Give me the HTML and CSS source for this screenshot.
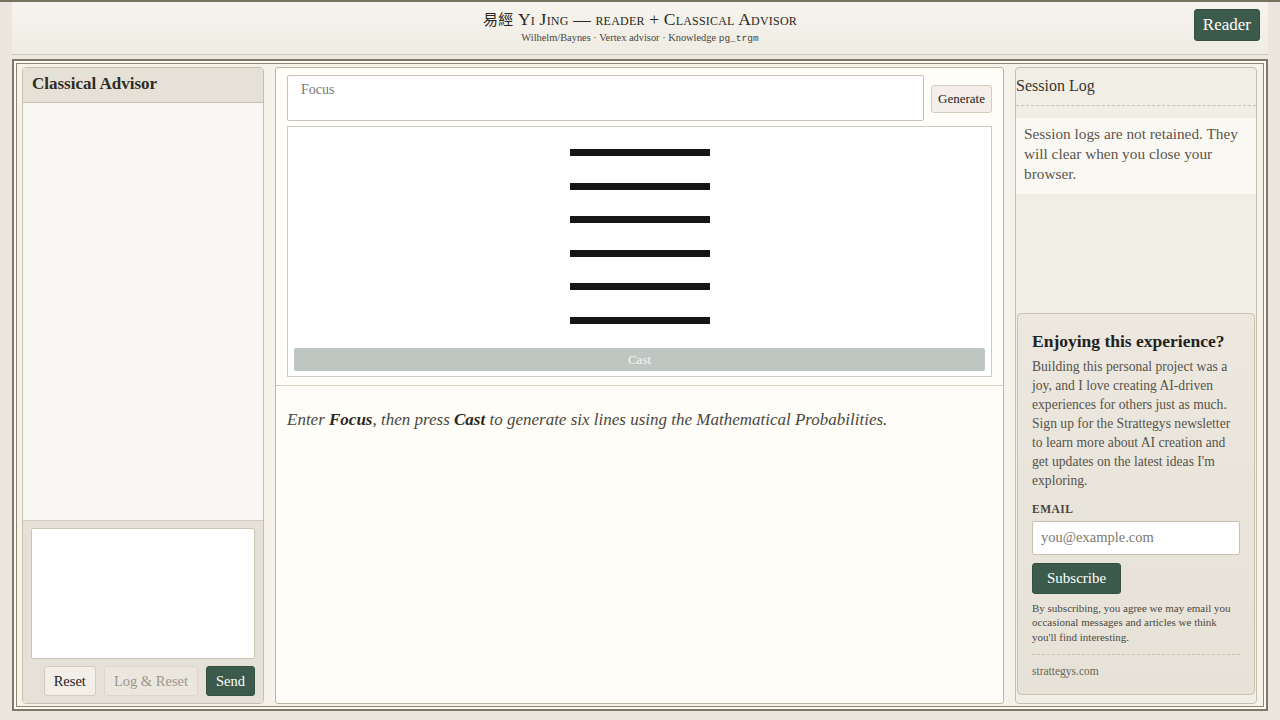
FILE: index.html
```html
<!DOCTYPE html>
<html lang="en">
<head>
  <meta charset="UTF-8">
  <title>Yi Jing Reader</title>
  <link rel="stylesheet" href="styles.css">
</head>
<body>
  <header class="topbar">
    <div class="brand">
      <div class="brand-title"><span class="han">易經</span> Yi Jing — reader + Classical Advisor</div>
      <div class="brand-sub">Wilhelm/Baynes · Vertex advisor · Knowledge <code>pg_trgm</code></div>
    </div>
    <button class="btn btn-green reader-btn">Reader</button>
  </header>

  <main class="frame">
    <section class="panel advisor">
      <div class="advisor-head">Classical Advisor</div>
      <div class="advisor-body"></div>
      <div class="advisor-foot">
        <textarea class="advisor-input"></textarea>
        <div class="advisor-actions">
          <button class="btn btn-light">Reset</button>
          <button class="btn btn-light btn-disabled">Log &amp; Reset</button>
          <button class="btn btn-green">Send</button>
        </div>
      </div>
    </section>

    <section class="panel reader">
      <div class="cast-form">
        <div class="focus-row">
          <textarea class="focus-input" placeholder="Focus"></textarea>
          <button class="btn btn-light gen-btn">Generate</button>
        </div>
        <div class="hex-box">
          <div class="hex-lines">
            <div class="hex-line"></div>
            <div class="hex-line"></div>
            <div class="hex-line"></div>
            <div class="hex-line"></div>
            <div class="hex-line"></div>
            <div class="hex-line"></div>
          </div>
          <button class="cast-btn">Cast</button>
        </div>
      </div>
      <div class="reading">
        <p class="hint">Enter <b>Focus</b>, then press <b>Cast</b> to generate six lines using the Mathematical Probabilities.</p>
      </div>
    </section>

    <aside class="panel side">
      <div class="log-head">Session Log</div>
      <div class="log-note">Session logs are not retained. They will clear when you close your browser.</div>

      <div class="promo">
        <h3>Enjoying this experience?</h3>
        <p class="promo-text">Building this personal project was a joy, and I love creating AI-driven experiences for others just as much. Sign up for the Strattegys newsletter to learn more about AI creation and get updates on the latest ideas I'm exploring.</p>
        <label class="promo-label">EMAIL</label>
        <input class="promo-input" type="text" placeholder="you@example.com">
        <button class="btn btn-green sub-btn">Subscribe</button>
        <p class="promo-fine">By subscribing, you agree we may email you occasional messages and articles we think you'll find interesting.</p>
        <div class="promo-site">strattegys.com</div>
      </div>
    </aside>
  </main>
</body>
</html>
```

FILE: styles.css
```css
* { box-sizing: border-box; }

body {
  margin: 0;
  height: 720px;
  overflow: hidden;
  background: #ebe7de;
  border-top: 2px solid #77715f;
  font-family: "Liberation Serif", "Noto Sans CJK SC", serif;
  color: #2f2b25;
}

.topbar {
  margin: 0 12px;
  height: 53px;
  position: relative;
  display: flex;
  justify-content: center;
  background: linear-gradient(#f6f4ee, #efece3);
  border-bottom: 1px solid #cfc8b8;
}
.brand { text-align: center; padding-top: 6px; }
.brand-title {
  font-size: 17.5px;
  font-variant: small-caps;
  color: #2b2721;
  letter-spacing: 0.2px;
}
.han { font-family: "Noto Sans CJK TC", serif; font-size: 15px; }
.brand-sub { font-size: 10.4px; color: #4a453c; margin-top: 2px; }
.brand-sub code { font-family: "Liberation Mono", monospace; font-size: 9.5px; }

.reader-btn {
  position: absolute;
  right: 8px;
  top: 7px;
  height: 32px;
  padding: 0 8px;
  font-size: 17px;
}

.btn {
  font-family: "Liberation Serif", serif;
  border-radius: 3px;
  cursor: pointer;
}
.btn-green {
  background: #3d5b4c;
  color: #fff;
  border: 1px solid #34503f;
}
.btn-light {
  background: #f3efe8;
  color: #222;
  border: 1px solid #d3ccbd;
}
.btn-disabled { color: #9b958b; background: #ebe7df; border-color: #ddd7ca; }

.frame {
  margin: 4px 12px 0;
  height: 652px;
  padding: 6px 9px 5px 8px;
  border: 2px solid #7f7866;
  box-shadow: inset 0 0 0 2px #fcfaf3, inset 0 0 0 3px #8d8674;
  background: #f5f2ea;
  display: grid;
  grid-template-columns: 242px 1fr 242px;
  gap: 11px;
}

.panel {
  border: 1px solid #c6bfae;
  border-radius: 4px;
  overflow: hidden;
  display: flex;
  flex-direction: column;
}

/* left column */
.advisor { background: #f9f7f3; }
.advisor-head {
  height: 35px;
  padding: 6px 9px 0;
  font-size: 17px;
  font-weight: bold;
  background: #e6e1d6;
  border-bottom: 1px solid #c8c0ae;
}
.advisor-body { flex: 1; }
.advisor-foot {
  height: 183px;
  background: #e6e1d8;
  border-top: 1px solid #d3ccbd;
  padding: 7px 8px 0;
}
.advisor-input {
  display: block;
  width: 100%;
  height: 131px;
  resize: none;
  background: #fff;
  border: 1px solid #cbc4b4;
  border-radius: 2px;
}
.advisor-actions {
  display: flex;
  justify-content: flex-end;
  gap: 8px;
  margin-top: 7px;
}
.advisor-actions .btn { height: 30px; font-size: 14.5px; padding: 0 9px; }

/* center column */
.reader { background: #fefdf8; border-color: #bdb5a3; border-radius: 3px; }
.cast-form {
  padding: 7px 11px 8px;
  border-bottom: 1px solid #d6cfbe;
}
.focus-row { display: flex; align-items: center; gap: 7px; }
.focus-input {
  flex: 1;
  height: 46px;
  resize: none;
  border: 1px solid #c9c2b2;
  border-radius: 2px;
  padding: 6px 13px;
  font-family: "Liberation Serif", serif;
  font-size: 14px;
  background: #fff;
}
.focus-input::placeholder { color: #777; }
.gen-btn { height: 28px; padding: 0 6px; font-size: 13px; margin-top: 1px; }

.hex-box {
  margin-top: 5px;
  height: 251px;
  background: #fff;
  border: 1px solid #d2cbbd;
  padding: 22px 6px 5px;
  display: flex;
  flex-direction: column;
}
.hex-lines {
  display: flex;
  flex-direction: column;
  align-items: center;
  gap: 26.5px;
}
.hex-line { width: 140px; height: 7px; background: #161616; }
.cast-btn {
  margin-top: auto;
  height: 23px;
  background: #bdc6c1;
  border: none;
  border-radius: 2px;
  color: #f4f6f4;
  font-family: "Liberation Serif", serif;
  font-size: 13px;
}

.reading { padding: 0 11px; }
.hint {
  margin: 24px 0 0;
  font-size: 17px;
  font-style: italic;
  color: #4b4740;
}
.hint b { color: #2b2721; }

/* right column */
.side { background: #f1eee6; padding-bottom: 8px; }
.log-head {
  height: 38px;
  padding-top: 9px;
  font-size: 16px;
  color: #3a362f;
  border-bottom: 1px dashed #c9c2b2;
}
.log-note {
  margin-top: 12px;
  padding: 6px 8px 10px;
  background: #faf8f3;
  font-size: 15.3px;
  line-height: 20px;
  color: #5a554c;
}

.promo {
  margin: auto 1px 0;
  padding: 16px 14px 17px;
  background: linear-gradient(#ece8df, #e7e2d8);
  border: 1px solid #cac3b2;
  border-radius: 4px;
}
.promo h3 { margin: 0; font-size: 17.5px; line-height: 22px; color: #222; }
.promo-text {
  margin: 6.5px 0 0;
  font-size: 13.6px;
  line-height: 18.9px;
  color: #57524a;
}
.promo-label {
  display: block;
  margin-top: 12px;
  font-size: 11.5px;
  line-height: 13px;
  font-weight: bold;
  letter-spacing: 0.5px;
  color: #4a453d;
}
.promo-input {
  display: block;
  width: 100%;
  height: 34px;
  margin-top: 5px;
  padding: 0 8px;
  border: 1px solid #c9c2b2;
  border-radius: 2px;
  font-family: "Liberation Serif", serif;
  font-size: 14.5px;
}
.promo-input::placeholder { color: #7d786f; }
.sub-btn { margin-top: 8px; height: 31px; padding: 0 14px; font-size: 15px; }
.promo-fine {
  margin: 7px 0 0;
  font-size: 11px;
  line-height: 14.5px;
  color: #4d483f;
  padding-bottom: 10px;
  border-bottom: 1px dashed #c8c1b0;
}
.promo-site { margin-top: 10px; font-size: 11.5px; color: #6a655b; }
```
